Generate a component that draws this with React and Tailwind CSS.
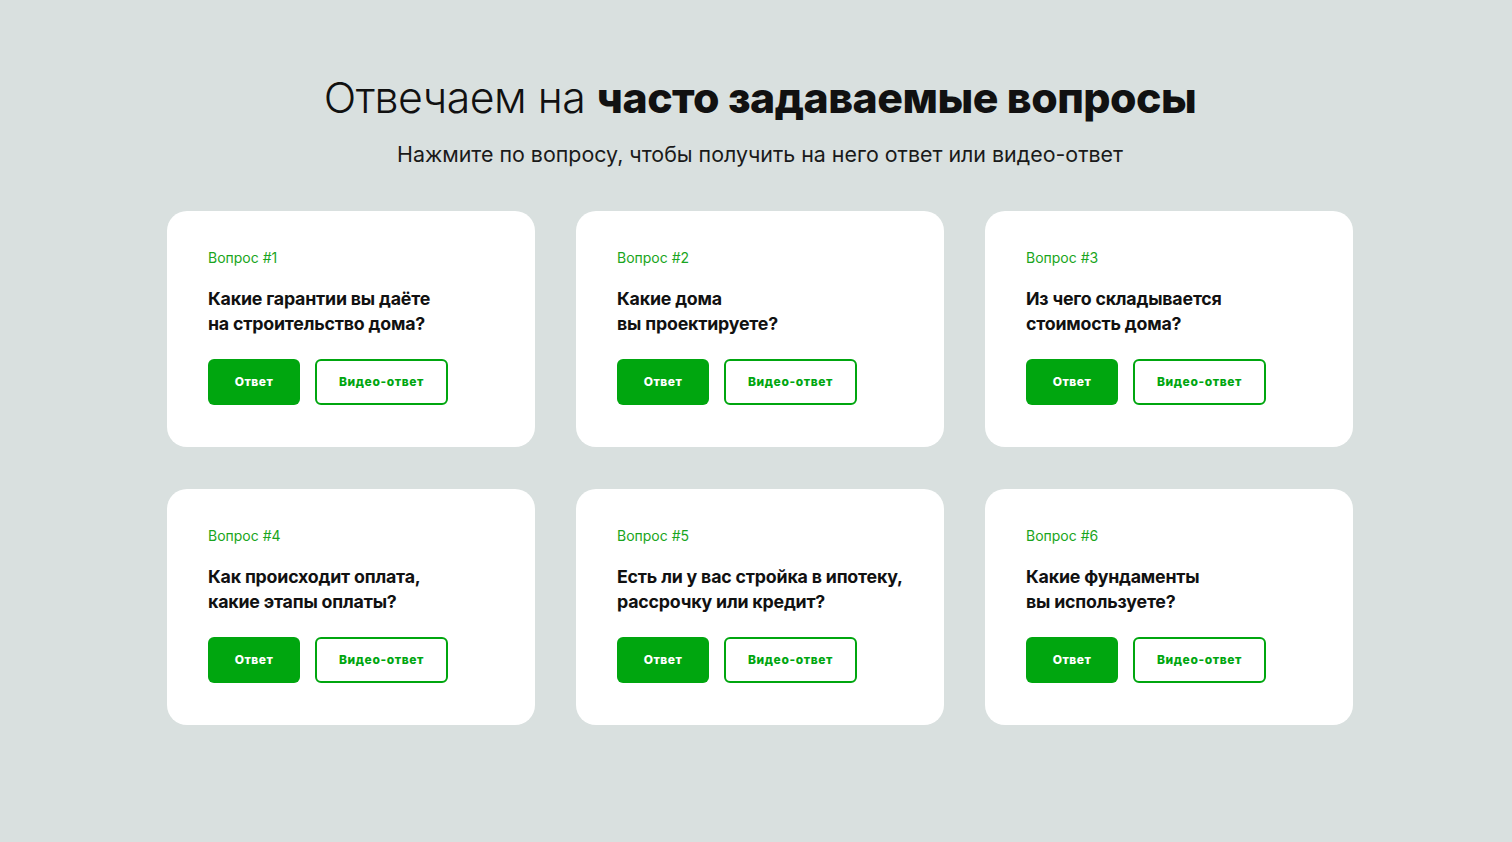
import React from 'react';

const questions = [
  ['Какие гарантии вы даёте', 'на строительство дома?'],
  ['Какие дома', 'вы проектируете?'],
  ['Из чего складывается', 'стоимость дома?'],
  ['Как происходит оплата,', 'какие этапы оплаты?'],
  ['Есть ли у вас стройка в ипотеку,', 'рассрочку или кредит?'],
  ['Какие фундаменты', 'вы используете?'],
];

function Card({ num, lines }) {
  return (
    <div className="bg-white rounded-[20px] pl-[41px] pr-6 pt-[37px] pb-[42px]">
      <div className="text-[14px] leading-[20px] text-[#1aa521]">Вопрос #{num}</div>
      <div className="mt-[18px] text-[17.8px] leading-[25px] font-bold text-[#111] tracking-[-0.2px]">
        {lines[0]}
        <br />
        {lines[1]}
      </div>
      <div className="mt-[23px] flex gap-[15px]">
        <button className="w-[92px] h-[46px] rounded-[6px] bg-[#00a60f] text-white text-[12px] font-extrabold tracking-[0.5px]">
          Ответ
        </button>
        <button className="w-[133px] h-[46px] rounded-[6px] border-2 border-[#00a60f] bg-white text-[#00a60f] text-[12px] font-extrabold tracking-[0.6px]">
          Видео-ответ
        </button>
      </div>
    </div>
  );
}

export default function App() {
  return (
    <div className="min-h-screen bg-[#d9e0df] flex flex-col items-center pt-[70px] pb-[100px] font-['Inter',sans-serif]">
      <h1 className="ml-[8px] text-[42.8px] leading-[56px] text-[#111] tracking-[-0.5px]">
        <span className="font-light">Отвечаем на </span>
        <span className="font-extrabold">часто задаваемые вопросы</span>
      </h1>
      <p className="ml-[8px] mt-[14px] text-[21.4px] leading-[28px] text-[#1a1a1a]">
        Нажмите по вопросу, чтобы получить на него ответ или видео-ответ
      </p>
      <div className="ml-[8px] mt-[43px] grid grid-cols-3 gap-x-[41px] gap-y-[42px] w-[1186px]">
        {questions.map((q, i) => (
          <Card key={i} num={i + 1} lines={q} />
        ))}
      </div>
    </div>
  );
}
